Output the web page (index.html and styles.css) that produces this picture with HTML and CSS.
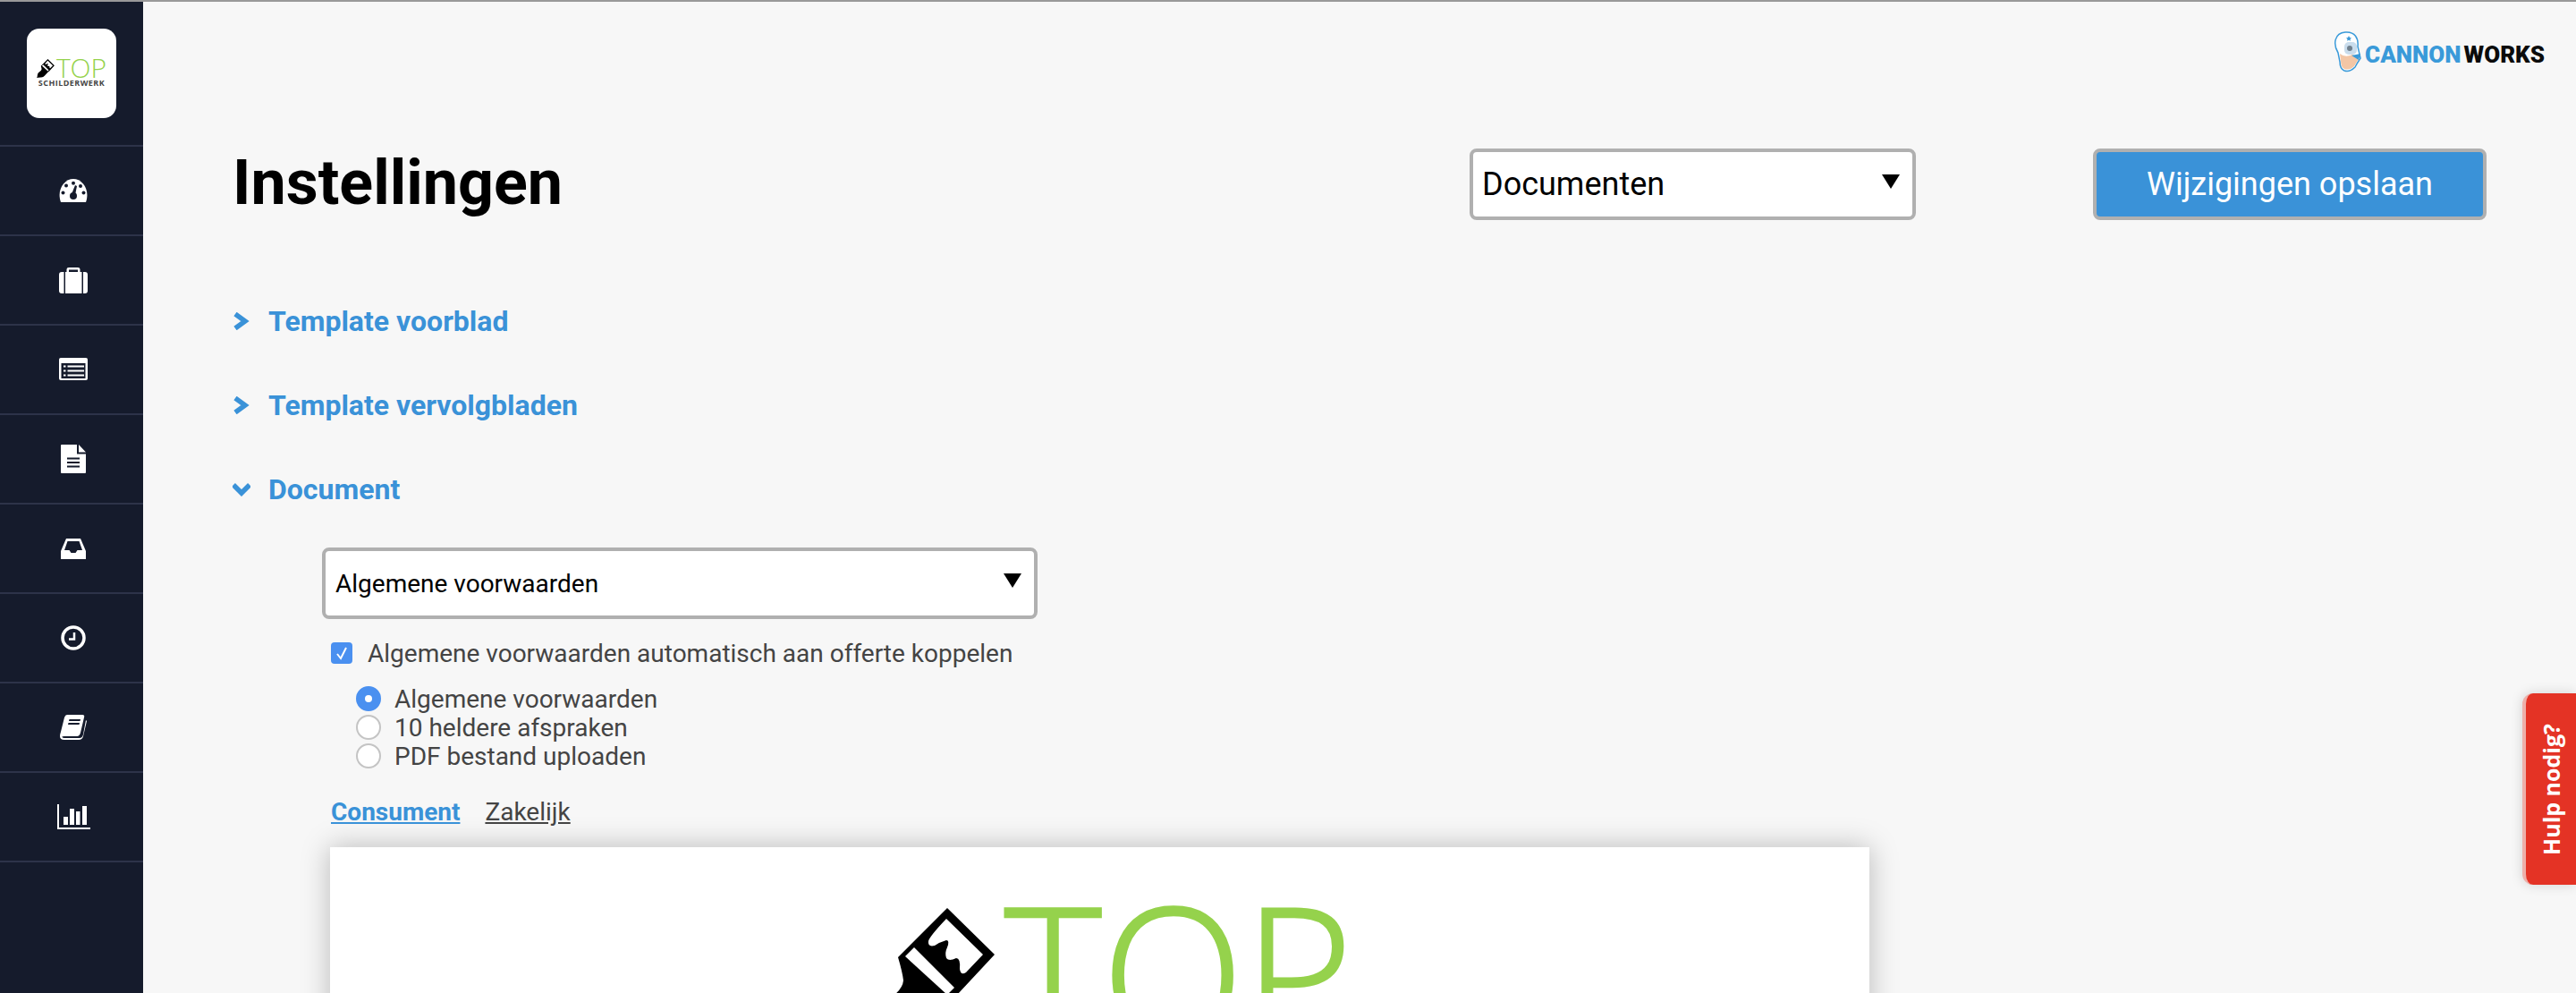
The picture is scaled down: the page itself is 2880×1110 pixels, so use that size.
FILE: index.html
```html
<!DOCTYPE html>
<html lang="nl">
<head>
<meta charset="utf-8">
<title>Instellingen</title>
<link rel="stylesheet" href="styles.css">
</head>
<body>
<svg class="defs" width="0" height="0" aria-hidden="true">
  <symbol id="brush" viewBox="0 0 141 150">
    <path d="M88 0L141 52L100 96Q96 100 90 104L62 134Q52 148 30 146Q8 147 0 150Q6 140 5 128Q6 112 22 102Q38 92 39 81Q38 72 33 55Z" fill="#000"/>
    <path d="M41 54L51 44L96 89L88 97Z" fill="#fff"/>
    <path d="M87 12L128 52L109 72Q103 76 102 68Q103 56 98 56Q90 60 87 56Q85 50 88 44Q91 36 87 36Q80 38 74 42Q66 44 67 37Q68 32 87 12Z" fill="#fff"/>
  </symbol>
</svg>
<div class="topline"></div>
<div class="app">
  <nav class="sidebar">
    <div class="logo-cell">
      <div class="logo-tile">
        <div class="logo-row">
          <svg class="logo-brush"><use href="#brush"/></svg>
          <span class="logo-top">TOP</span>
        </div>
        <div class="logo-sub">SCHILDERWERK</div>
      </div>
    </div>
    <a class="nav-item"><svg width="32" height="26" viewBox="0 0 32 26"><path d="M2 26C-3 12 6 0 16 0C26 0 35 12 30 26Z" fill="#fff"/><g fill="#151b2c"><circle cx="4.5" cy="15.5" r="2"/><circle cx="8" cy="7.5" r="2"/><circle cx="16" cy="4.7" r="2"/><circle cx="24" cy="8" r="2"/><circle cx="27.5" cy="15.5" r="2"/><circle cx="16" cy="19" r="4"/><path d="M18 7L20 8L18 18L14 17Z"/></g></svg></a>
    <a class="nav-item"><svg width="32" height="29" viewBox="0 0 32 29"><path d="M8.5 5V2Q8.5 0 11 0H21Q23.500 0 23.500 2V5H29Q32 5 32 8V26Q32 29 29 29H3Q0 29 0 26V8Q0 5 3 5ZM11 5H21V2.500H11Z" fill="#fff" fill-rule="evenodd"/><path d="M5.500 5h1.500v24H5.500zM25.500 5h1.500v24h-1.500z" fill="#151b2c"/></svg></a>
    <a class="nav-item"><svg width="32" height="27" viewBox="0 0 32 27"><rect width="32" height="25" rx="2" fill="#fff"/><rect x="2.500" y="6" width="27" height="17" fill="#151b2c"/><path d="M5 8.500h2.500v2H5zM9.500 8.500H28v2H9.500zM5 13.500h2.500v2H5zM9.500 13.500H28v2H9.500zM5 18.500h2.500v2H5zM9.500 18.500H28v2H9.500z" fill="#fff"/></svg></a>
    <a class="nav-item"><svg width="28" height="32" viewBox="0 0 28 32"><path d="M1 0H18V10.500H28V31Q28 32 27 32H1Q0 32 0 31V1Q0 0 1 0ZM20 0L28 8.500H20Z" fill="#fff"/><path d="M7 14.500h14v2H7zM7 19h14v2H7zM7 23.500h14v2H7z" fill="#151b2c"/></svg></a>
    <a class="nav-item"><svg width="28" height="23" viewBox="0 0 28 23"><path d="M6 0H22L28 14V23H0V14Z" fill="#fff"/><path d="M7.500 3H20.500L24 13H18.500L16.500 16H11.500L9.500 13H4Z" fill="#151b2c"/></svg></a>
    <a class="nav-item"><svg width="28" height="28" viewBox="0 0 28 28"><circle cx="14" cy="14" r="12" fill="none" stroke="#fff" stroke-width="3.500"/><path d="M15 8V15.500H9" fill="none" stroke="#fff" stroke-width="2.500"/></svg></a>
    <a class="nav-item"><svg width="30" height="28" viewBox="0 0 30 28"><path d="M8 0H25Q28 0 27 3L23 20Q22 24 19 24H5Q2 24 2.500 25Q3 26 5 26H22Q25 26 26 22L29 6L30 7L26 24Q25 28 21 28H5Q0 28 0 24Q0 22 1 19L5 3Q6 0 8 0Z" fill="#fff"/><path d="M10.500 5H23L22.500 7H10ZM9.500 9H22L21.500 11H9Z" fill="#151b2c"/></svg></a>
    <a class="nav-item"><svg width="37" height="28" viewBox="0 0 37 28"><path d="M1 0V27H37" fill="none" stroke="#fff" stroke-width="2"/><path d="M7 14h5v9H7zM14 5h5v18h-5zM21 8h4.500v15H21zM28 2h5v21h-5z" fill="#fff"/></svg></a>
  </nav>
  <main class="main">
    <header class="brandbar">
      <svg class="mascot" width="32" height="46" viewBox="0 0 32 46">
        <path d="M5 24C-1 14 1 2 13 1C24 0 28 8 27 17L30 30Q26 36 24 40Q18 46 12 44Q7 42 7 34Z" fill="#fff" stroke="#3a9ad9" stroke-width="1.500"/>
        <path d="M7 25Q13 30 21 26L29 29Q25 36 23 39Q18 44 12 42Q8 40 8 33Z" fill="#f3c6a5"/>
        <rect x="12" y="12" width="14" height="14" rx="5" fill="#c9dcec"/>
        <circle cx="18" cy="19" r="3" fill="#707f8c"/>
        <path d="M17 5l1 2 2 .3-1.500 1.400.4 2-1.900-1-1.900 1 .4-2L14 7.300l2-.3z" fill="#3a9ad9"/>
        <path d="M20 27L30 25L28 32Z" fill="#3a9ad9"/>
      </svg>
      <span class="brand-word"><span class="brand-cannon">CANNON</span><span class="brand-works">WORKS</span></span>
    </header>
    <div class="title-row">
      <h1 class="title">Instellingen</h1>
      <div class="select select-top"><span>Documenten</span><i class="caret"></i></div>
      <button class="save">Wijzigingen opslaan</button>
    </div>
    <section class="acc-row">
      <svg class="chev" width="20" height="20" viewBox="0 0 20 20"><path d="M3 2L14 10L3 18" fill="none" stroke="#3a92d8" stroke-width="5.500"/></svg>
      <h2 class="acc-title">Template voorblad</h2>
    </section>
    <section class="acc-row">
      <svg class="chev" width="20" height="20" viewBox="0 0 20 20"><path d="M3 2L14 10L3 18" fill="none" stroke="#3a92d8" stroke-width="5.500"/></svg>
      <h2 class="acc-title">Template vervolgbladen</h2>
    </section>
    <section class="acc-row">
      <svg class="chev" width="20" height="20" viewBox="0 0 20 20"><path d="M1 5L10 14L19 5" fill="none" stroke="#3a92d8" stroke-width="5.500"/></svg>
      <h2 class="acc-title">Document</h2>
    </section>
    <div class="panel">
      <div class="select select-doc"><span>Algemene voorwaarden</span><i class="caret"></i></div>
      <div class="options">
        <label class="check-row">
          <span class="check"><svg width="14" height="16" viewBox="0 0 14 16"><path d="M2 9L6 14L12 2" fill="none" stroke="#fff" stroke-width="2"/></svg></span>
          Algemene voorwaarden automatisch aan offerte koppelen
        </label>
        <div class="radios">
          <label class="radio-row"><span class="radio on"></span>Algemene voorwaarden</label>
          <label class="radio-row"><span class="radio"></span>10 heldere afspraken</label>
          <label class="radio-row"><span class="radio"></span>PDF bestand uploaden</label>
        </div>
        <div class="tabs">
          <a class="tab active">Consument</a>
          <a class="tab">Zakelijk</a>
        </div>
      </div>
      <article class="sheet">
        <div class="sheet-logo">
          <svg class="sheet-brush"><use href="#brush"/></svg>
          <span class="sheet-top">TOP</span>
        </div>
      </article>
    </div>
  </main>
</div>
<a class="help"><span class="help-label">Hulp nodig?</span></a>
</body>
</html>
```
FILE: styles.css
```css
* { box-sizing: border-box; }
html, body { margin: 0; height: 1110px; overflow: hidden; }
body { background: #f7f7f7; font-family: Roboto, "Liberation Sans", sans-serif; color: #444; position: relative; }
.defs { position: absolute; }
.topline { position: absolute; top: 0; left: 0; right: 0; height: 2px; background: #999; z-index: 5; }
.app { display: flex; height: 1110px; }

.sidebar { width: 160px; flex: none; background: #151b2c; }
.logo-cell { height: 164px; padding: 32px 30px 0; border-bottom: 2px solid #2d3349; }
.logo-tile { width: 100px; height: 100px; background: #fff; border-radius: 14px; padding-top: 33px; display: flex; flex-direction: column; align-items: center; }
.logo-row { display: flex; align-items: flex-start; height: 23px; }
.logo-brush { width: 20px; height: 21px; margin-top: 1px; margin-right: 2px; }
.logo-top { font-family: "Open Sans", sans-serif; font-weight: 300; font-size: 30px; line-height: 22px; color: #95d24c; }
.logo-sub { font-family: "Open Sans", sans-serif; font-weight: 700; font-size: 9px; line-height: 10px; letter-spacing: .45px; color: #444; }
.nav-item { display: flex; align-items: center; justify-content: center; height: 100px; padding-left: 4px; border-bottom: 2px solid #2d3349; }

.main { flex: 1; min-width: 0; height: 1110px; overflow: hidden; padding: 0 100px 0 100px; }
.brandbar { height: 166px; margin-right: -65px; padding-top: 35px; display: flex; align-items: flex-start; justify-content: flex-end; gap: 3px; }
.mascot { flex: none; }
.brand-word { font-family: Roboto, sans-serif; font-weight: 900; font-size: 26px; line-height: 26px; margin-top: 13px; display: flex; gap: 3px; }
.brand-cannon { color: #3a9ad9; }
.brand-works { color: #0b0b0b; }

.title-row { display: flex; align-items: center; height: 80px; margin-bottom: 66px; }
.title { margin: 0 auto 3px 0; font-size: 70px; font-weight: 700; line-height: 77px; color: #000; }
.select { display: flex; align-items: center; justify-content: space-between; background: #fff; border: 4px solid #b0b0b0; border-radius: 8px; color: #000; height: 80px; }
.select-top { width: 499px; font-size: 36px; padding: 0 14px 0 10px; margin-right: 198px; }
.select-doc { width: 800px; font-size: 28px; padding: 0 14px 0 11px; }
.caret { width: 0; height: 0; border-left: 10px solid transparent; border-right: 10px solid transparent; border-top: 16px solid #000; margin-top: -6px; }
.save { width: 440px; height: 80px; background: #3a92d8; border: 4px solid #b0b0b0; border-radius: 8px; color: #fff; font: 400 36px Roboto, sans-serif; padding: 0; }

.acc-row { display: flex; align-items: center; height: 94px; }
.chev { flex: none; margin-right: 20px; }
.acc-title { margin: 0; font-size: 32px; font-weight: 700; color: #3a92d8; }

.panel { margin-left: 100px; padding-top: 18px; width: 1730px; }
.options { padding-left: 10px; font-size: 28px; color: #444; }
.check-row { display: flex; align-items: center; height: 32px; margin-top: 22px; }
.check { display: flex; align-items: center; justify-content: center; width: 24px; height: 24px; border-radius: 4px; background: #4a90f0; margin-right: 17px; }
.radios { margin: 19px 0 0 28px; }
.radio-row { display: flex; align-items: center; height: 32px; }
.radio { width: 28px; height: 28px; border-radius: 50%; background: #fff; border: 2px solid #c4c4c4; margin-right: 15px; }
.radio.on { background: #4a90f0; border: 10px solid #4a90f0; position: relative; }
.radio.on::after { content: ""; position: absolute; inset: 0; border-radius: 50%; background: #fff; }
.tabs { display: flex; gap: 28px; margin-top: 30px; line-height: 34px; }
.tab { text-decoration: underline; color: #444; }
.tab.active { color: #3a92d8; font-weight: 700; }

.sheet { margin: 22px 0 0 9px; width: 1721px; height: 1400px; background: #fff; box-shadow: 0 0 30px rgba(0,0,0,.25); padding: 68px 0 0 24px; display: flex; justify-content: center; }
.sheet-logo { display: flex; align-items: flex-start; height: 300px; }
.sheet-brush { width: 141px; height: 150px; margin-right: 11px; }
.sheet-top { font-family: "Open Sans", sans-serif; font-weight: 300; font-size: 208px; line-height: 140px; color: #95d24c; -webkit-text-stroke: 2.5px #95d24c; }

.help { position: absolute; right: 0; top: 775px; width: 60px; height: 214px; display: flex; align-items: center; justify-content: center; background: #e43325; border-left: 4px solid #eeb0aa; border-radius: 12px 0 0 12px; box-shadow: 0 0 14px rgba(0,0,0,.15); color: #fff; z-index: 4; }
.help-label { font-family: "Open Sans", sans-serif; font-weight: 700; font-size: 25px; writing-mode: vertical-rl; transform: rotate(180deg); }
```
